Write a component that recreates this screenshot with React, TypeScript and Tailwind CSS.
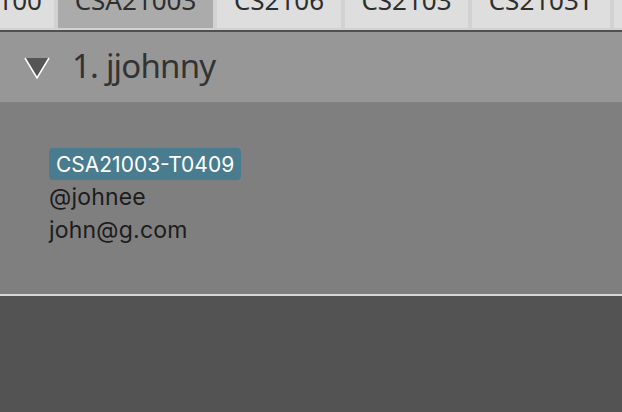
import React from 'react';

const tabs = [
  { label: '100', w: 'w-[54px]', active: false, align: 'justify-end pr-[12px]' },
  { label: 'CSA21003', w: 'w-[155px]', active: true, align: 'justify-center' },
  { label: 'CS2106', w: 'w-[124px]', active: false, align: 'justify-center' },
  { label: 'CS2103', w: 'w-[123px]', active: false, align: 'justify-center' },
  { label: 'CS2103T', w: 'w-[138px]', active: false, align: 'justify-center' },
  { label: '', w: 'flex-1', active: false, align: 'justify-center' },
];

export default function App() {
  return (
    <div className="w-[622px] h-[412px] flex flex-col bg-[#535353] overflow-hidden font-['Noto_Sans',sans-serif]">
      {/* Tab bar */}
      <div className="h-[30px] flex gap-[4px] bg-[#d2d2d2] pb-[2px] shrink-0">
        {tabs.map((t, i) => (
          <div
            key={i}
            className={`${t.w} h-[28px] flex items-end overflow-hidden ${t.align} ${t.active ? 'bg-[#ababab]' : 'bg-[#dedede]'}`}
          >
            <span className="text-[26px] leading-[26px] text-[#2e2e2e] whitespace-nowrap mb-[15px]">{t.label}</span>
          </div>
        ))}
      </div>

      {/* Person card header */}
      <div className="h-[72px] shrink-0 border-t-2 border-[#505050] bg-[#979797] flex items-center pl-[24px]">
        <svg width="26" height="22" viewBox="0 0 26 22" className="mr-[22px] mt-[2px]">
          <polygon points="1,1 25,1 13,21" fill="#555555" />
          <polyline points="1,1 13,21 25,1" fill="none" stroke="#ffffff" strokeWidth="1.5" />
        </svg>
        <span className="text-[33px] text-[#333333] tracking-[-0.8px] mb-[2px]">1. jjohnny</span>
      </div>

      {/* Details */}
      <div className="h-[192px] shrink-0 bg-[#7f7f7f] pl-[49px] pt-[46px] flex flex-col items-start font-['Inter',sans-serif]">
        <span className="bg-[#4a7c8f] text-white rounded-[4px] px-[7px] h-[32px] flex items-center text-[21px] leading-none">
          CSA21003-T0409
        </span>
        <span className="text-[23px] leading-[34px] text-[#1c1c1c] tracking-[0.2px]">@johnee</span>
        <span className="text-[23px] leading-[34px] text-[#1c1c1c] tracking-[0.2px] -mt-[1px]">john@g.com</span>
      </div>

      <div className="h-[2px] shrink-0 bg-[#d6d6d6]" />
      <div className="flex-1 bg-[#535353]" />
    </div>
  );
}
